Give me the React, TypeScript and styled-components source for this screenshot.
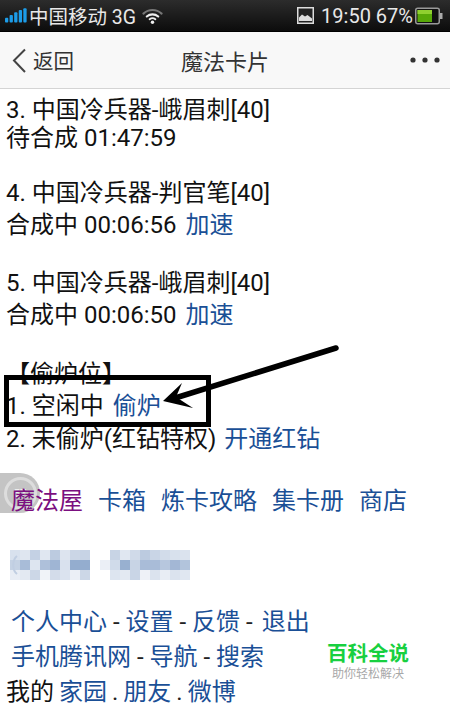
import React from "react";
import styled, { createGlobalStyle } from "styled-components";

const Global = createGlobalStyle`
  html, body { margin: 0; padding: 0; background: #fff; }
  body { width: 450px; height: 711px; overflow: hidden; }
`;
const Page = styled.div`
  position: relative; width: 450px; height: 711px; overflow: hidden; background: #fff;
  font-family: "Roboto", "Noto Sans CJK SC", sans-serif; color: #111;
`;
const StatusBar = styled.div`
  height: 31px; display: flex; align-items: center; justify-content: space-between;
  padding: 0 7px 0 5px; color: #e8e8e8; font-size: 19.5px;
  background: linear-gradient(#2c2c2c, #0c0c0c); border-bottom: 1px solid #000;
`;
const StatusGroup = styled.div`display: flex; align-items: center; gap: 2px;`;
const StatusText = styled.span<{ $right?: number; $left?: number; $size?: number }>`
  margin: 0 ${p => p.$right ?? 0}px 0 ${p => p.$left ?? 0}px;
  font-size: ${p => p.$size ?? 19.5}px;
`;
const NavBar = styled.div`
  position: relative; height: 56px; display: flex; align-items: center; justify-content: space-between;
  background: #f8f8f8; border-bottom: 1px solid #d4d4d4; padding: 0 10px 0 12px; color: #333; font-size: 20.5px;
`;
const Back = styled.div`display: flex; align-items: center; gap: 6px;`;
const Title = styled.div`position: absolute; left: 0; right: 0; text-align: center; font-size: 22px; pointer-events: none;`;
const Content = styled.div`position: relative; z-index: 1; padding: 7px 0 0 6px; font-size: 24px;`;
const Row = styled.div<{ $h: number; $mt?: number; $inset?: number }>`
  height: ${p => p.$h}px; line-height: ${p => p.$h}px; margin-top: ${p => p.$mt ?? 0}px;
  padding-left: ${p => p.$inset ?? 0}px; white-space: nowrap;
`;
const Link = styled.span<{ $left?: number; $purple?: boolean }>`
  color: ${p => (p.$purple ? "#7b0f80" : "#1a4f96")}; margin-left: ${p => p.$left ?? 0}px;
`;
const Plain = styled.span`color: #222;`;
const Dot = styled.span`color: #222; margin: 0 5px;`;
const Highlight = styled.div`
  position: absolute; z-index: 2; left: 4px; top: 375px; width: 197px; height: 42px; border: 5px solid #000;
`;
const Overlay = styled.svg`position: absolute; z-index: 2; left: 0; top: 0; pointer-events: none;`;
const Bubble = styled.div`
  position: absolute; left: 0; top: 473px; width: 40px; height: 40px; border-radius: 0 20px 20px 0;
  background: #c4c4c4; display: flex; align-items: center; justify-content: center;
`;
const BubbleRing = styled.div`
  width: 27px; height: 27px; border-radius: 50%; border: 3px solid #ddd;
  color: #eee; font-size: 11px; font-weight: 700; display: flex; align-items: center; justify-content: center;
`;
const Mosaic = styled.svg`display: block; margin: 32px 0 0 4px;`;
const Watermark = styled.div`
  position: absolute; z-index: 2; left: 326px; top: 642px; width: 84px; text-align: center;
`;
const WatermarkTitle = styled.div`color: #18d040; font-size: 20.5px; font-weight: 700; line-height: 24px; white-space: nowrap;`;
const WatermarkSub = styled.div`color: #a8a8a8; font-size: 12px; line-height: 16px; white-space: nowrap;`;

const Signal = () => (
  <svg width="22" height="18" viewBox="0 0 24 18">
    {[[0, 11], [5, 8], [10, 5], [15, 2.5], [20, 0.5]].map(([x, y]) => (
      <rect key={x} x={x} y={y} width="3.6" height={16 - y} rx="1" fill="#1c9ce8" />
    ))}
  </svg>
);
const Wifi = () => (
  <svg width="21" height="18" viewBox="0 0 22 18" fill="none" strokeLinecap="round">
    <path d="M1.5 6.5C7 1.5 15 1.5 20.5 6.5" stroke="#777" strokeWidth="2.2" />
    <path d="M5 9.5C8.5 6.5 13.5 6.5 17 9.5" stroke="#eee" strokeWidth="2.2" />
    <path d="M8 12.3C9.8 11 12.2 11 14 12.3" stroke="#eee" strokeWidth="2" />
    <circle cx="11" cy="15.5" r="1.8" fill="#eee" />
  </svg>
);
const ImageIcon = () => (
  <svg width="17" height="17" viewBox="0 0 17 17">
    <rect x=".75" y=".75" width="15.5" height="15.5" fill="#222" stroke="#ddd" strokeWidth="1.5" />
    <path d="M2 14V10.5L5 7.5L8 9.5L10.5 8L15 11.5V14Z" fill="#ddd" />
  </svg>
);
const Battery = () => (
  <svg width="28" height="18" viewBox="0 0 28 18">
    <rect x=".75" y="1.25" width="23.5" height="15.5" rx="2" fill="#111" stroke="#999" strokeWidth="1.5" />
    <rect x="2.5" y="3" width="14.5" height="12" fill="#58a808" />
    <rect x="2.5" y="3" width="14.5" height="4" fill="#90d030" />
    <rect x="25" y="6" width="2.5" height="6" fill="#aaa" />
  </svg>
);
const Chevron = () => (
  <svg width="15" height="25" viewBox="0 0 15 25" fill="none">
    <path d="M13 1.5L2 12.5L13 24" stroke="#444" strokeWidth="2" />
  </svg>
);
const Dots = () => (
  <svg width="30" height="6" viewBox="0 0 30 6" fill="#333">
    <circle cx="3" cy="3" r="2.6" /><circle cx="15" cy="3" r="2.6" /><circle cx="27" cy="3" r="2.6" />
  </svg>
);

const mosaicLeft = [
  ["#d8e1ee", "#dfe6f0", "#c4d1e4", "#e0e7f1", "#bccbe0", "#dde4ef", "#cbd6e6", "#c7d3e5"],
  ["#c5d2e4", "#a8bcd8", "#dde5f0", "#aec0da", "#9fb5d4", "#d9e1ee", "#94adcf", "#94adcf"],
  ["#e8edf5", "#e3e9f2", "#ccd7e7", "#f0f3f8", "#d3dcea", "#dbe3ef", "#ebeff6", "#ccd7e7"],
];
const mosaicRight = [
  ["#ffffff", "#c8d4e5", "#e0e7f1", "#d0dae9", "#bccbe0", "#c9d5e6", "#d2dcea", "#d8e1ed", "#dbe3ee"],
  ["#ebeff6", "#d0dbea", "#98b0d0", "#c8d4e5", "#a9bcd8", "#a9bcd8", "#b7c7de", "#a3b7d5", "#b2c4dc"],
  ["#ffffff", "#dde5f0", "#e3e9f2", "#c9d5e6", "#eef1f7", "#dbe3ee", "#e8edf4", "#dbe3ee", "#e0e7f1"],
];

export default function App() {
  return (
    <Page>
      <Global />
      <StatusBar>
        <StatusGroup><Signal /><StatusText $right={4}>中国移动 3G</StatusText><Wifi /></StatusGroup>
        <StatusGroup><ImageIcon /><StatusText $left={5} $size={20}>19:50 67%</StatusText><Battery /></StatusGroup>
      </StatusBar>
      <NavBar>
        <Back><Chevron /><span>返回</span></Back>
        <Title>魔法卡片</Title>
        <Dots />
      </NavBar>
      <Bubble><BubbleRing>57</BubbleRing></Bubble>
      <Content>
        <Row $h={28}>3. 中国冷兵器-峨眉刺[40]</Row>
        <Row $h={28}>待合成 01:47:59</Row>
        <Row $h={32} $mt={25}>4. 中国冷兵器-判官笔[40]</Row>
        <Row $h={32}>合成中 00:06:56<Link $left={9}>加速</Link></Row>
        <Row $h={32} $mt={26}>5. 中国冷兵器-峨眉刺[40]</Row>
        <Row $h={32}>合成中 00:06:50<Link $left={9}>加速</Link></Row>
        <Row $h={32} $mt={27}>【偷炉位】</Row>
        <Row $h={32}>1. 空闲中<Link $left={9}>偷炉</Link></Row>
        <Row $h={34}>2. 未偷炉(红钻特权)<Link $left={8}>开通红钻</Link></Row>
        <Row $h={34} $mt={28} $inset={5}>
          <Link $purple>魔法屋</Link><Link $left={15}>卡箱</Link><Link $left={15}>炼卡攻略</Link><Link $left={15}>集卡册</Link><Link $left={15}>商店</Link>
        </Row>
        <Mosaic width="190" height="30" viewBox="0 0 190 30">
          {mosaicLeft.flatMap((r, y) => r.map((c, x) => <rect key={`l${x}${y}`} x={x * 10} y={y * 10} width="10" height="10" fill={c} />))}
          {mosaicRight.flatMap((r, y) => r.map((c, x) => <rect key={`r${x}${y}`} x={90 + x * 10} y={y * 10} width="10" height="10" fill={c} />))}
          <path d="M7 6C2 10 2 20 7 24" stroke="#c0cee2" strokeWidth="2" fill="none" />
        </Mosaic>
        <Row $h={34} $mt={25} $inset={5}><Link>个人中心</Link><Plain> - </Plain><Link>设置</Link><Plain> - </Plain><Link>反馈</Link><Plain> - </Plain><Link $left={3}>退出</Link></Row>
        <Row $h={35} $mt={1} $inset={5}><Link>手机腾讯网</Link><Plain> - </Plain><Link>导航</Link><Plain> - </Plain><Link>搜索</Link></Row>
        <Row $h={34}>我的<Link $left={5}>家园</Link><Dot>.</Dot><Link>朋友</Link><Dot>.</Dot><Link>微博</Link></Row>
      </Content>
      <Highlight />
      <Overlay width="450" height="711" viewBox="0 0 450 711">
        <path d="M336 348L172 399" stroke="#000" strokeWidth="5.5" strokeLinecap="round" />
        <path d="M163 401L182 383L176 397L193 408Z" fill="#000" />
      </Overlay>
      <Watermark>
        <WatermarkTitle>百科全说</WatermarkTitle>
        <WatermarkSub>助你轻松解决</WatermarkSub>
      </Watermark>
    </Page>
  );
}
